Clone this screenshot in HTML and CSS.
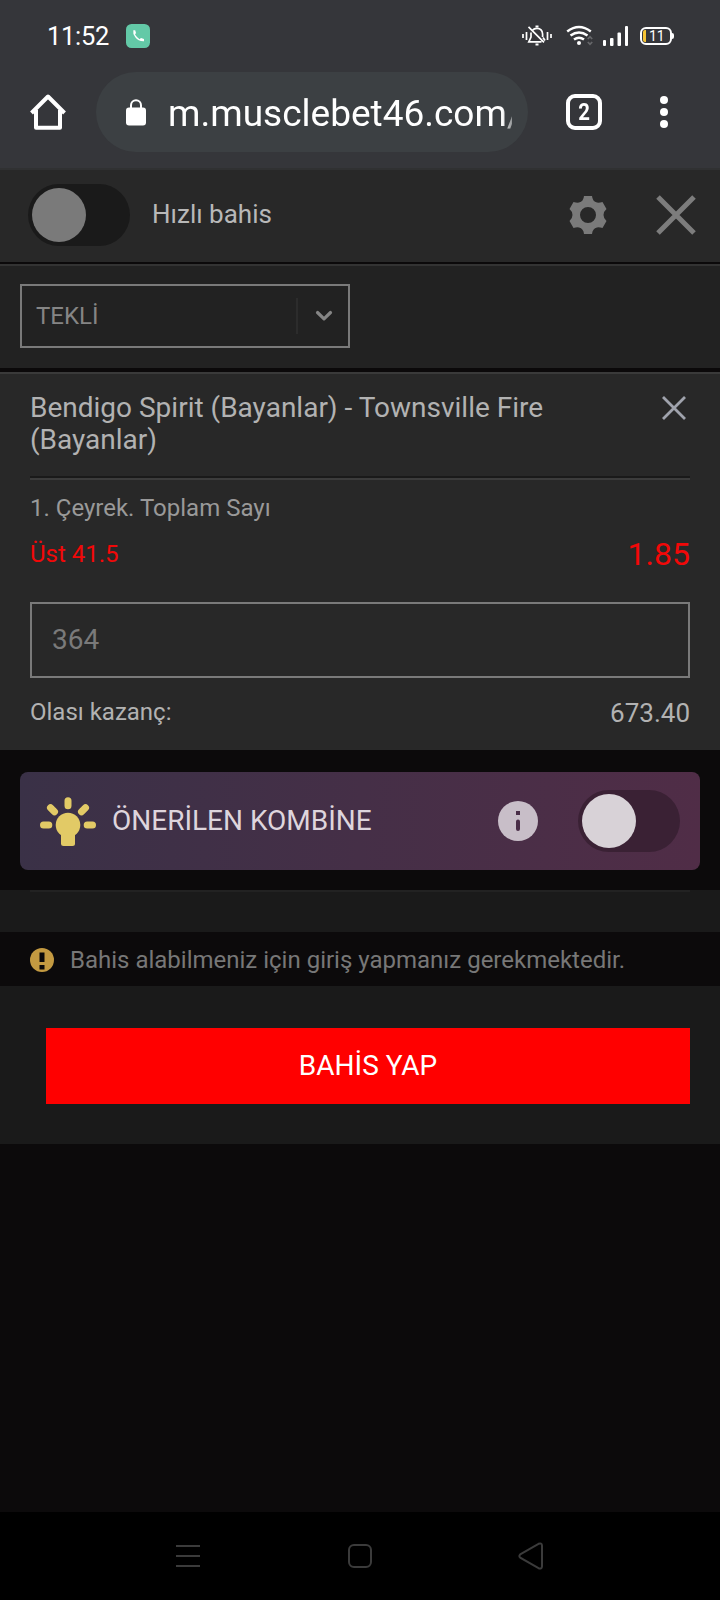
FILE: index.html
```html
<!DOCTYPE html>
<html lang="tr">
<head>
<meta charset="utf-8">
<title>Kupon</title>
<link rel="stylesheet" href="styles.css">
</head>
<body>
<div class="phone">
  <header class="browser">
    <div class="status">
      <span class="clock">11:52</span>
      <svg class="call" width="24" height="24" viewBox="0 0 24 24"><rect width="24" height="24" rx="5.5" fill="#63c9a7"/><path d="M7.300 6.300L9.200 6.300L10 9L9 10.500Q10.800 13.300 13.500 15.200L15 14.100L18 15V17.300Q12.500 17.600 9.300 13.300Q6.500 9.700 7.300 6.300Z" fill="#fff"/></svg>
      <div class="signals">
        <svg width="30" height="22" viewBox="0 0 30 22" fill="none" stroke="#fff" stroke-width="2"><path d="M1 9v4M4.500 7v8M25.500 7v8M29 9v4" stroke-width="1.700"/><path d="M10.500 5.200Q12 3.300 15 3.300Q20.300 3.300 20.600 9v3M9 7.500V12L6.800 16.800H19.500M6.500 1.800L22 17.300M21 12.500L23 15.500" stroke-width="1.700"/><path d="M13.500 1.400h3M13.500 19.600h3"/></svg>
        <svg width="28" height="22" viewBox="0 0 28 22" fill="none" stroke="#fff" stroke-width="2.500"><path d="M1.200 6.500Q13 -2.500 24.800 6.500M4.500 10.500Q13 4.500 21.500 10.500M8 14.600Q13 11 18 14.600"/><circle cx="13" cy="18" r="2" fill="#fff" stroke="none"/><path d="M21.800 14L24 11.700L26.200 14M21.800 17L24 19.300L26.200 17" stroke="#66676a" stroke-width="1.800"/></svg>
        <svg width="25" height="20" viewBox="0 0 25 20" fill="#fff"><rect y="14" width="3" height="6" rx="1"/><rect x="7" y="12" width="3.500" height="8" rx="1"/><rect x="14.500" y="6.500" width="3.500" height="13.500" rx="1"/><rect x="22" width="3" height="20" rx="1"/></svg>
        <div class="battery"><span>11</span></div>
      </div>
    </div>
    <div class="toolbar">
      <svg class="home" width="36" height="38" viewBox="0 0 36 38" fill="none" stroke="#fff" stroke-width="4" stroke-linejoin="round"><path d="M1.500 20L18 3.500L34.500 20M6 17V34.800H30V17"/></svg>
      <div class="address">
        <svg width="20" height="27" viewBox="0 0 20 27"><rect y="8.500" width="20" height="18" rx="3" fill="#fff"/><path d="M5 9V6.300a5 5 0 0 1 10 0V9" fill="none" stroke="#fff" stroke-width="2"/></svg>
        <span class="url">m.musclebet46.com/</span>
      </div>
      <span class="tabs"><span>2</span></span>
      <svg class="more" width="8" height="32" viewBox="0 0 8 32" fill="#fff"><circle cx="4" cy="4" r="4"/><circle cx="4" cy="16" r="4"/><circle cx="4" cy="28" r="4"/></svg>
    </div>
  </header>

  <section class="quick">
    <span class="switch"></span>
    <span class="quick-label">Hızlı bahis</span>
    <svg class="gear" width="38" height="40" viewBox="0 0 38 40"><path fill="#7a7a7a" fill-rule="evenodd" d="M15 1H23Q23.500 6.500 28 7.500Q30 8 33.500 7L37.500 14Q34.500 16.500 34.500 20Q34.500 23.500 37.500 26L33.500 33Q30 32 28 32.500Q23.500 33.500 23 39H15Q14.500 33.500 10 32.500Q8 32 4.500 33L.5 26Q3.500 23.500 3.500 20Q3.500 16.500 .5 14L4.500 7Q8 8 10 7.500Q14.500 6.500 15 1ZM19 12a8 8 0 1 0 0 16a8 8 0 1 0 0-16Z"/></svg>
    <svg class="close" width="40" height="40" viewBox="0 0 40 40" stroke="#7d7d7d" stroke-width="5"><path d="M2 2L38 38M38 2L2 38"/></svg>
  </section>

  <section class="mode">
    <div class="select">
      <span>TEKLİ</span>
      <i class="select-line"></i>
      <svg width="18" height="12" viewBox="0 0 18 12" fill="none" stroke="#858585" stroke-width="3.200" stroke-linecap="round" stroke-linejoin="round"><path d="M2.500 2.500L9 8.800L15.500 2.500"/></svg>
    </div>
  </section>

  <section class="bet">
    <div class="match">
      <h1>Bendigo Spirit (Bayanlar) - Townsville Fire (Bayanlar)</h1>
      <svg width="24" height="24" viewBox="0 0 24 24" stroke="#a0a3ad" stroke-width="2.800"><path d="M1 1L23 23M23 1L1 23"/></svg>
    </div>
    <p class="market">1. Çeyrek. Toplam Sayı</p>
    <div class="pick"><span>Üst 41.5</span><b>1.85</b></div>
    <div class="stake">364</div>
    <div class="win"><span>Olası kazanç:</span><b>673.40</b></div>
  </section>

  <section class="suggest">
    <div class="card">
      <svg class="bulb" width="56" height="50" viewBox="0 0 56 50"><g fill="#e2ca66"><circle cx="28" cy="28" r="12.300"/><path d="M21 35H35V46.500Q35 49 32.500 49H23.500Q21 49 21 46.500Z"/></g><g stroke="#e2ca66" stroke-width="7" stroke-linecap="round"><path d="M28 3.700V8.700M3.500 28H8.800M47.200 28H52.500M10.500 10.800L14.500 14.800M45.500 10.800L41.500 14.800"/></g></svg>
      <span class="card-title">ÖNERİLEN KOMBİNE</span>
      <svg class="info" width="40" height="40" viewBox="0 0 40 40"><circle cx="20" cy="20" r="20" fill="#c8bec8"/><path d="M18 10h4v4h-4zM18 20.500q0-2 2-2t2 2v7.500q0 2-2 2t-2-2z" fill="#492d47"/></svg>
      <span class="switch switch-light"></span>
    </div>
  </section>

  <div class="spacer"><hr></div>
  <div class="notice">
    <svg width="24" height="24" viewBox="0 0 24 24"><circle cx="12" cy="12" r="12" fill="#c49a41"/><path d="M9.500 4.500h5V14h-5zM9.500 17h5v4.500h-5z" fill="#0b090a"/></svg>
    <span>Bahis alabilmeniz için giriş yapmanız gerekmektedir.</span>
  </div>
  <div class="action"><div class="submit">BAHİS YAP</div></div>

  <nav class="sysnav">
    <svg width="24" height="24" viewBox="0 0 24 24" stroke="#3b3b3b" stroke-width="2"><path d="M0 2H24M0 12H24M0 22H24"/></svg>
    <svg width="24" height="24" viewBox="0 0 24 24" fill="none" stroke="#3b3b3b" stroke-width="2"><rect x="1" y="1" width="22" height="22" rx="5"/></svg>
    <svg width="26" height="28" viewBox="0 0 26 28" fill="none" stroke="#3b3b3b" stroke-width="2"><path d="M2.200 12.400L20.500 1.800Q23.800 .5 24 3.500V24.500Q23.800 27.500 20.500 26.200L2.200 15.600Q.5 14 2.200 12.400Z"/></svg>
  </nav>
</div>
</body>
</html>
```
FILE: styles.css
```css
* { box-sizing: border-box; }
body { margin: 0; background: #0c0a0b; font-family: Roboto, sans-serif; }
svg { display: block; flex: none; }
b, h1 { font-weight: 400; }
.phone { width: 720px; height: 1600px; display: flex; flex-direction: column; overflow: hidden; background: #0c0a0b; }
.phone > * { flex: none; }

.browser { height: 170px; background: #35363a; border-bottom: 2px solid #303132; }
.status { height: 72px; display: flex; align-items: center; padding: 0 46px 0 47px; }
.clock { width: 79px; font-size: 25.500px; line-height: 30px; color: #fff; letter-spacing: -.3px; }
.signals { margin-left: auto; display: flex; align-items: center; }
.signals svg:nth-child(2) { margin-left: 14px; }
.signals svg:nth-child(3) { margin-left: 9px; }
.battery { position: relative; width: 32px; height: 18px; margin-left: 12px; margin-right: 2px; border: 2px solid #fff; border-radius: 6px; color: #fff; font-size: 14px; line-height: 14px; padding-left: 7px; }
.battery::before { content: ""; position: absolute; left: 1px; top: 1px; width: 3px; height: 12px; background: #f6c434; border-radius: 2px 0 0 2px; }
.battery::after { content: ""; position: absolute; right: -4px; top: 4px; width: 2px; height: 6px; background: #fff; border-radius: 0 2px 2px 0; }
.toolbar { height: 80px; display: flex; align-items: center; padding-left: 30px; }
.address { width: 432px; height: 80px; margin-left: 30px; border-radius: 40px; background: #3c4043; display: flex; align-items: center; padding: 0 16px 0 30px; }
.url { width: 344px; margin-left: 22px; overflow: hidden; white-space: nowrap; font-size: 37px; line-height: 52px; padding-top: 3px; color: #fff; -webkit-mask-image: linear-gradient(90deg, #000 334px, transparent 352px); mask-image: linear-gradient(90deg, #000 334px, transparent 352px); }
.tabs { width: 36px; height: 36px; margin-left: 38px; border: 4px solid #fff; border-radius: 9px; color: #fff; font-size: 24px; font-weight: 700; line-height: 29px; text-align: center; }
.tabs span { display: block; transform: scaleX(.85); }
.more { margin-left: 58px; }

.switch { flex: none; width: 102px; height: 62px; padding: 4px; border-radius: 31px; background: #1a1a1a; }
.switch::before { content: ""; display: block; width: 54px; height: 54px; border-radius: 50%; background: #7a7a7a; }
.quick { height: 94px; padding: 14px 24px 14px 28px; display: flex; align-items: flex-start; background: #282828; border-bottom: 2px solid #0b090a; }
.quick-label { margin-left: 22px; line-height: 60px; font-size: 26px; color: #b8b8b8; }
.gear { margin: 11px 49px 0 auto; }
.close { margin-top: 11px; }

.mode { height: 108px; padding: 18px 20px; background: #222; border-top: 2px solid #333; border-bottom: 4px solid #0b090a; }
.select { width: 330px; height: 64px; border: 2px solid #7a7a7a; display: flex; align-items: center; padding: 0 15px 0 14px; font-size: 24px; color: #858585; }
.select-line { width: 2px; height: 36px; margin-left: auto; background: #2c2c2c; }
.select svg { margin-left: 17px; }

.bet { height: 378px; padding: 0 30px; background: #282828; border-top: 2px solid #3a3a3a; }
.match { height: 104px; padding: 18px 4px 0 0; display: flex; justify-content: space-between; border-bottom: 2px solid #1a1a1a; }
.match h1 { width: 560px; margin: 0; font-size: 28px; line-height: 32px; color: #b2b2b2; }
.match svg { margin-top: 4px; }
.market { height: 50px; margin: 0; padding-top: 13px; border-top: 2px solid #3c3c3c; font-size: 24px; line-height: 30px; color: #999; }
.pick { height: 74px; display: flex; justify-content: space-between; color: #f20808; font-size: 24px; line-height: 52px; }
.pick b { font-size: 32px; line-height: 53px; }
.stake { height: 76px; border: 2px solid #7a7a7a; padding-left: 20px; font-size: 28px; line-height: 72px; color: #7a7a7a; }
.win { display: flex; justify-content: space-between; font-size: 24px; line-height: 68px; color: #b2b2b2; }
.win b { font-size: 26px; line-height: 70px; }

.suggest { height: 140px; padding: 22px 20px 0; background: #0c0a0b; }
.card { height: 98px; border-radius: 8px; padding: 0 20px; display: flex; align-items: center; background: linear-gradient(92deg, #3a3147, #502d47); }
.bulb { margin-top: 2px; }
.card-title { margin-left: 16px; padding-bottom: 2px; font-size: 28px; color: #ded5dd; white-space: nowrap; }
.info { margin: 0 40px 0 auto; }
.switch-light { background: #3a2134; }
.switch-light::before { background: #d8d2d7; }

.spacer { height: 42px; padding: 0 30px; background: #1a1a1a; }
.spacer hr { height: 2px; margin: 0; border: 0; background: #222; }
.notice { height: 54px; padding: 2px 30px 0; display: flex; align-items: center; background: #0c0a0b; color: #777; font-size: 24px; }
.notice svg { margin-right: 16px; }
.action { height: 158px; padding: 42px 30px 40px 46px; background: #1a1a1a; }
.submit { height: 76px; background: #f00; color: #fff; text-align: center; font-size: 28px; line-height: 75px; }
.sysnav { height: 88px; margin-top: auto; padding: 0 176px; background: #000; display: grid; grid-template-columns: 172px 170px 26px; align-items: center; }
```
